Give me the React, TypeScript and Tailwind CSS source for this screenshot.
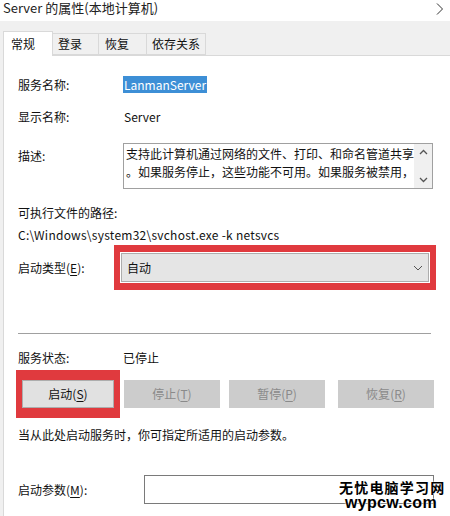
const font = "font-['Noto_Sans_CJK_SC','Noto_Sans',sans-serif]";

function Key({ k }: { k: string }) {
  return (
    <>
      (<span className="underline underline-offset-2">{k}</span>)
    </>
  );
}

function Row({ label, children }: { label: React.ReactNode; children: React.ReactNode }) {
  return (
    <div className="flex h-4 items-center">
      <div className="w-[105px] shrink-0">{label}</div>
      <div>{children}</div>
    </div>
  );
}

export default function App() {
  return (
    <div className={`relative h-[516px] w-[450px] overflow-hidden bg-[#f0f0f0] text-[12px] text-[#111] ${font}`}>
      {/* Title bar */}
      <div className="flex h-[21px] items-start justify-between bg-white pl-[3px] pr-[6px]">
        <span className="text-[13px] leading-[15px] text-[#222]">Server 的属性(本地计算机)</span>
        <svg width="8" height="12" viewBox="0 0 8 12" className="mt-[3px]">
          <polyline points="1,0.5 6.5,6 1,11.5" fill="none" stroke="#333" strokeWidth="1" />
        </svg>
      </div>

      {/* Tabs */}
      <div className="mt-[10px] flex items-end pl-[3px]">
        <div className="relative z-10 -mb-px flex h-[25px] w-[50px] items-center border border-b-0 border-[#d9d9d9] bg-white pl-[7px]">
          常规
        </div>
        <div className="flex h-[22px] w-[46px] items-center border border-l-0 border-[#d9d9d9] pl-[5px]">登录</div>
        <div className="flex h-[22px] w-[48px] items-center border border-l-0 border-[#d9d9d9] pl-[6px]">恢复</div>
        <div className="flex h-[22px] w-[59px] items-center border border-l-0 border-[#d9d9d9] pl-[5px]">依存关系</div>
      </div>

      {/* Panel */}
      <div className="ml-[3px] h-[470px] border-l border-t border-[#d9d9d9] bg-white pl-[14px]">
        <div className="mt-[21px]">
          <Row label="服务名称:">
            <span className="bg-[#3d8fd6] px-[1px] leading-[16px] text-white">LanmanServer</span>
          </Row>
        </div>
        <div className="mt-[16px]">
          <Row label="显示名称:">
            <span className="pl-[1px]">Server</span>
          </Row>
        </div>

        <div className="mt-[18px] flex">
          <div className="w-[105px] shrink-0 pt-[4px]">描述:</div>
          <div className="flex h-[46px] w-[310px] border border-[#a0a0a0] bg-white">
            <div className="flex-1 pl-[2px] pt-[1px] leading-[18px]">
              <div>支持此计算机通过网络的文件、打印、和命名管道共享</div>
              <div>。如果服务停止，这些功能不可用。如果服务被禁用，</div>
            </div>
            <div className="flex w-[18px] flex-col items-center justify-between bg-[#f0f0f0] py-[5px]">
              <svg width="9" height="6" viewBox="0 0 9 6">
                <polyline points="1,5 4.5,1.5 8,5" fill="none" stroke="#555" strokeWidth="1.3" />
              </svg>
              <svg width="9" height="6" viewBox="0 0 9 6">
                <polyline points="1,1 4.5,4.5 8,1" fill="none" stroke="#555" strokeWidth="1.3" />
              </svg>
            </div>
          </div>
        </div>

        <div className="mt-[16px] flex h-4 items-center">可执行文件的路径:</div>
        <div className="mt-[6px] flex h-4 items-center tracking-[0.25px]">C:\Windows\system32\svchost.exe -k netsvcs</div>

        <div className="mt-[2px] flex items-center">
          <div className="w-[96px] shrink-0">
            启动类型<Key k="E" />:
          </div>
          <div className="border-x-[6px] border-y-[7px] border-[#e03a3e] p-[1px]">
            <div className="flex h-[29px] w-[308px] items-center justify-between border border-[#adadad] bg-[#e5e5e5] pl-[5px] pr-[5px]">
              <span>自动</span>
              <svg width="10" height="6" viewBox="0 0 10 6">
                <polyline points="1,1 5,5 9,1" fill="none" stroke="#555" strokeWidth="1" />
              </svg>
            </div>
          </div>
        </div>

        <div className="mt-[43px] h-px w-[413px] bg-[#a0a0a0]" />

        <div className="mt-[16px]">
          <Row label="服务状态:">已停止</Row>
        </div>

        <div className="mt-[4px] flex items-start">
          <div className="-ml-[2px] border-x-[6px] border-y-[10px] border-[#e03a3e]">
            <div className="flex h-[28px] w-[92px] items-center justify-center border border-[#adadad] bg-[#e1e1e1]">
              启动<Key k="S" />
            </div>
          </div>
          <div className="ml-[4px] mt-[10px] flex h-[28px] w-[96px] items-center justify-center bg-[#cccccc] text-[#8a8a8a]">
            停止<Key k="T" />
          </div>
          <div className="ml-[9px] mt-[10px] flex h-[28px] w-[96px] items-center justify-center bg-[#cccccc] text-[#8a8a8a]">
            暂停<Key k="P" />
          </div>
          <div className="ml-[13px] mt-[10px] flex h-[28px] w-[96px] items-center justify-center bg-[#cccccc] text-[#8a8a8a]">
            恢复<Key k="R" />
          </div>
        </div>

        <div className="mt-[9px] flex h-4 items-center">当从此处启动服务时，你可指定所适用的启动参数。</div>

        <div className="mt-[32px] flex items-center">
          <div className="w-[126px] shrink-0">
            启动参数<Key k="M" />:
          </div>
          <div className="h-[29px] w-[290px] border border-[#7a7a7a] bg-white" />
        </div>
      </div>

      {/* Watermark */}
      <div className="absolute left-[339px] top-[480px] flex flex-col items-start font-['Liberation_Sans','Noto_Sans_CJK_SC',sans-serif] font-bold text-black [text-shadow:0_0_2px_#fff,0_0_2px_#fff]">
        <span className="font-['Noto_Sans_CJK_SC',sans-serif] text-[14px] leading-[15px] tracking-[1.2px]">无忧电脑学习网</span>
        <span className="ml-[6px] text-[16px] leading-[16px] tracking-[0.3px]">wypcw.com</span>
      </div>
    </div>
  );
}
